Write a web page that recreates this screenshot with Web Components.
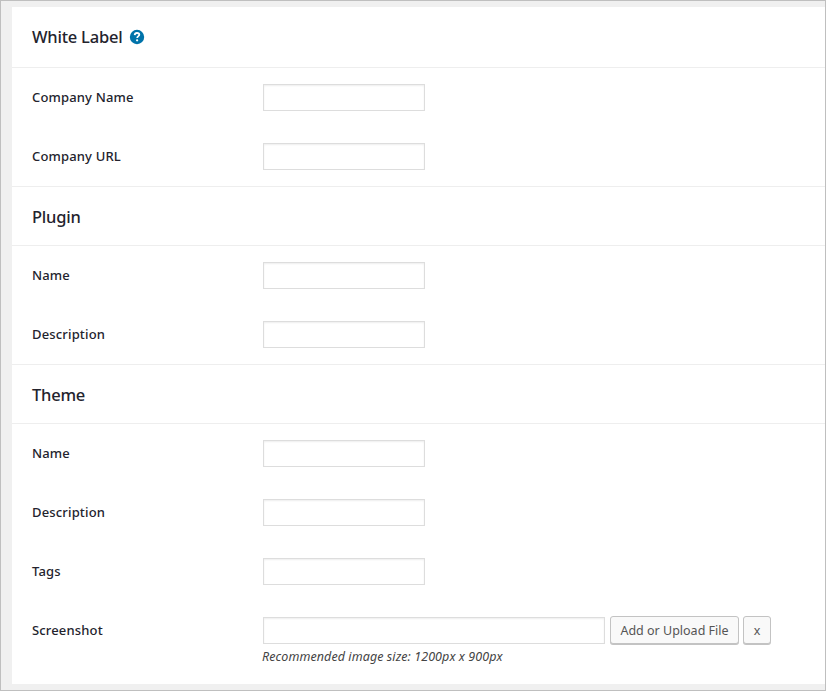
<!DOCTYPE html>
<html lang="en"><head><meta charset="utf-8"><title>White Label</title>
<style>
html,body{margin:0;height:100%}
body{font-family:"Noto Sans","Open Sans",sans-serif;font-size:13px;color:#23232d}
</style></head><body>
<settings-page>
  <settings-section class="first" heading="White Label">
    <help-icon slot="extra"></help-icon>
    <setting-row label="Company Name"><text-field></text-field></setting-row>
    <setting-row label="Company URL"><text-field></text-field></setting-row>
  </settings-section>
  <settings-section heading="Plugin">
    <setting-row label="Name"><text-field></text-field></setting-row>
    <setting-row label="Description"><text-field></text-field></setting-row>
  </settings-section>
  <settings-section heading="Theme">
    <setting-row label="Name"><text-field></text-field></setting-row>
    <setting-row label="Description"><text-field></text-field></setting-row>
    <setting-row label="Tags"><text-field></text-field></setting-row>
    <setting-row label="Screenshot"><text-field wide></text-field><wp-button class="upload">Add or Upload File</wp-button><wp-button class="clear">x</wp-button><span slot="note">Recommended image size: 1200px x 900px</span></setting-row>
  </settings-section>
</settings-page>
<script>
const define = (name, html, setup) => customElements.define(name, class extends HTMLElement {
  constructor() { super(); this.attachShadow({mode: 'open'}).innerHTML = html; }
  connectedCallback() { if (setup) setup(this, this.shadowRoot); }
});
define('settings-page', `<style>
:host{display:block;box-sizing:border-box;height:691px;border:1px solid #bfbfbf;background:#f0f0f0;padding:6px 0 6px 11px}
main{height:677px;background:#fff}
</style><main><slot></slot></main>`);
define('settings-section', `<style>
:host{display:block}
header{box-sizing:border-box;height:60px;border:solid #eee;border-width:1px 0;display:flex;align-items:center;padding:2px 20px 0}
:host(.first) header{height:61px;border-top:0;padding-top:0}
h2{margin:0;font-size:16.5px;line-height:24px;font-weight:500;letter-spacing:-.22px}
</style><header><h2></h2><slot name="extra"></slot></header><slot></slot>`,
 (el, r) => r.querySelector('h2').textContent = el.getAttribute('heading'));
define('setting-row', `<style>
:host{display:grid;grid-template-columns:231px 1fr;padding:16px 0 16px 20px}
label{font-size:13px;line-height:27px;font-weight:500;letter-spacing:.16px}
.controls{display:flex;height:27px;align-items:center}
.note{grid-column:2;font-size:12.5px;font-style:italic;line-height:18px;color:#444;letter-spacing:.08px;margin:4px 0 0 -1px}
</style><label></label><div class="controls"><slot></slot></div><div class="note"><slot name="note"></slot></div>`,
 (el, r) => { r.querySelector('label').textContent = el.getAttribute('label');
   if (!el.querySelector('[slot=note]')) r.querySelector('.note').remove(); });
define('text-field', `<style>
:host{display:block;width:162px;height:27px}
:host([wide]){width:342px}
input{display:block;box-sizing:border-box;width:100%;height:27px;margin:0;padding:3px 5px;border:1px solid #ddd;border-radius:0;background:#fff;box-shadow:inset 0 1px 2px rgba(0,0,0,.07);outline:0}
</style><input type="text">`);
define('wp-button', `<style>
:host{display:block}
:host(.upload){width:129px;margin-left:5px}
:host(.clear){width:28px;margin-left:4px}
button{display:block;box-sizing:border-box;width:100%;height:28px;margin:0 0 1px;padding:2px 0 0;border:1px solid #c3c3c3;border-radius:3px;background:#f9f9f9;box-shadow:0 1px 0 #c3c3c3;color:#555;font:12.5px/24px "Noto Sans",sans-serif;white-space:nowrap}
</style><button><slot></slot></button>`);
define('help-icon', `<style>
:host{display:block;margin-left:7px}svg{display:block}
</style><svg width="16" height="16" viewBox="0 0 16 16"><circle cx="8" cy="8" r="7.2" fill="#0073aa"/><path d="M5.7 6.1C5.8 4.5 6.8 4 8 4c1.4 0 2.3.7 2.3 1.8C10.3 7.1 8.2 7.2 8.2 9" fill="none" stroke="#fff" stroke-width="1.8"/><circle cx="8.1" cy="11.3" r="1.15" fill="#fff"/></svg>`);
</script></body></html>
